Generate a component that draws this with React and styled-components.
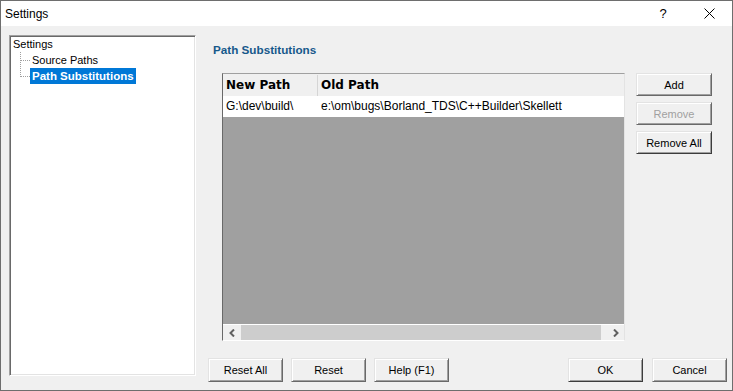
import React from "react";
import styled, { createGlobalStyle } from "styled-components";

const Global = createGlobalStyle`
  html, body { margin: 0; padding: 0; background: #f0f0f0; }
  body { font-family: "Liberation Sans", Arial, sans-serif; font-size: 11px; color: #000; }
  * { box-sizing: border-box; }
`;

const Window = styled.div`
  width: 733px;
  height: 391px;
  border: 1px solid #6e6e6e;
  background: #f0f0f0;
  display: flex;
  flex-direction: column;
`;

const TitleBar = styled.div`
  height: 25px;
  flex: none;
  background: #fff;
  display: flex;
  align-items: center;
`;

const Title = styled.div`
  flex: 1;
  padding-left: 4px;
  font-size: 12px;
`;

const CaptionButton = styled.div`
  width: 46px;
  height: 25px;
  display: flex;
  align-items: center;
  justify-content: center;
  font-size: 13px;
`;

const Body = styled.div`
  flex: 1;
  min-height: 0;
  display: flex;
  gap: 9px;
  padding: 9px 5px 8px 8px;
`;

const TreePanel = styled.div`
  width: 187px;
  height: 341px;
  flex: none;
  background: #fff;
  border: 1px solid;
  border-color: #a0a0a0 #fff #fff #a0a0a0;
  box-shadow: inset 1px 1px #696969, inset -1px -1px #e3e3e3;
`;

const TreeRoot = styled.div`
  height: 16px;
  line-height: 16px;
  padding-left: 3px;
`;

const TreeChildren = styled.div`
  position: relative;
  margin-left: 10px;
  &::before {
    content: "";
    position: absolute;
    left: 0;
    top: 0;
    height: 25px;
    border-left: 1px dotted #a0a0a0;
  }
`;

const TreeLeaf = styled.div`
  position: relative;
  height: 16px;
  padding-left: 10px;
  display: flex;
  align-items: center;
  &::before {
    content: "";
    position: absolute;
    left: 1px;
    top: 8px;
    width: 9px;
    border-top: 1px dotted #a0a0a0;
  }
`;

const LeafLabel = styled.span`
  height: 16px;
  line-height: 16px;
  padding: 0 2px;
  background: ${(p) => (p.$selected ? "#0078d7" : "transparent")};
  color: ${(p) => (p.$selected ? "#fff" : "#000")};
  font-weight: ${(p) => (p.$selected ? "bold" : "normal")};
  font-size: ${(p) => (p.$selected ? "11.5px" : "11px")};
`;

const RightColumn = styled.div`
  flex: 1;
  display: flex;
  flex-direction: column;
`;

const Heading = styled.div`
  margin: 7px 0 0 8px;
  height: 16px;
  line-height: 16px;
  font-weight: bold;
  font-size: 11.7px;
  color: #17598b;
`;

const Middle = styled.div`
  display: flex;
  align-items: flex-start;
  gap: 11px;
  margin-top: 15px;
  padding-left: 17px;
`;

const Grid = styled.div`
  width: 403px;
  height: 268px;
  border: 1px solid;
  border-color: #a0a0a0 #e3e3e3 #fff #696969;
  display: flex;
  flex-direction: column;
  background: #a0a0a0;
`;

const HeaderRow = styled.div`
  height: 22px;
  flex: none;
  display: grid;
  grid-template-columns: 95px 1fr;
  background: #f0f0f0;
`;

const HeaderCell = styled.div`
  padding-left: 3px;
  margin: 1px 0 0;
  line-height: 21px;
  font-family: "DejaVu Sans", Verdana, sans-serif;
  font-weight: bold;
  font-size: 12px;
  border-right: ${(p) => (p.$divider ? "1px solid #d5d5d5" : "none")};
`;

const DataRow = styled.div`
  height: 21px;
  flex: none;
  display: grid;
  grid-template-columns: 95px 1fr;
  background: #fff;
`;

const DataCell = styled.div`
  padding-left: 3px;
  line-height: 21px;
  font-size: 12px;
  white-space: nowrap;
`;

const Filler = styled.div`
  flex: 1;
  background: #a0a0a0;
`;

const HScroll = styled.div`
  height: 16px;
  flex: none;
  border-top: 1px solid #fff;
  background: #f0f0f0;
  display: flex;
`;

const ScrollArrow = styled.div`
  width: ${(p) => p.$w}px;
  flex: none;
  display: flex;
  align-items: center;
  justify-content: center;
`;

const Thumb = styled.div`
  width: 360px;
  flex: none;
  background: #cdcdcd;
`;

const Track = styled.div`
  flex: 1;
`;

const ButtonColumn = styled.div`
  display: flex;
  flex-direction: column;
  gap: 6px;
`;

const Button = styled.button`
  width: ${(p) => p.$w || 75}px;
  height: ${(p) => p.$h || 23}px;
  padding: 0;
  font-family: "Liberation Sans", Arial, sans-serif;
  font-size: 11px;
  color: ${(p) => (p.disabled ? "#a0a0a0" : "#000")};
  background: #f0f0f0;
  border: 1px solid;
  border-color: ${(p) =>
    p.$strong ? "#e3e3e3 #3c3c3c #3c3c3c #e3e3e3" : "#e3e3e3 #696969 #696969 #e3e3e3"};
  box-shadow: inset 1px 1px #fff, inset -1px -1px #a0a0a0;
`;

const BottomBar = styled.div`
  display: flex;
  align-items: center;
  gap: 8px;
  margin-top: 17px;
  padding-left: 3px;
`;

const Spacer = styled.div`
  flex: 1;
`;

const DialogButtons = styled.div`
  display: flex;
  gap: 9px;
`;

const Chevron = ({ dir }) => (
  <svg width="6" height="8" viewBox="0 0 6 8">
    <polyline
      points={dir === "left" ? "5,0.5 1.5,4 5,7.5" : "1,0.5 4.5,4 1,7.5"}
      fill="none"
      stroke="#606060"
      strokeWidth="2"
    />
  </svg>
);

export default function App() {
  return (
    <>
      <Global />
      <Window>
        <TitleBar>
          <Title>Settings</Title>
          <CaptionButton>?</CaptionButton>
          <CaptionButton>
            <svg width="11" height="11" viewBox="0 0 11 11">
              <path d="M0.5 0.5 L10.5 10.5 M10.5 0.5 L0.5 10.5" stroke="#000" strokeWidth="1" />
            </svg>
          </CaptionButton>
        </TitleBar>
        <Body>
          <TreePanel>
            <TreeRoot>Settings</TreeRoot>
            <TreeChildren>
              <TreeLeaf>
                <LeafLabel>Source Paths</LeafLabel>
              </TreeLeaf>
              <TreeLeaf>
                <LeafLabel $selected>Path Substitutions</LeafLabel>
              </TreeLeaf>
            </TreeChildren>
          </TreePanel>
          <RightColumn>
            <Heading>Path Substitutions</Heading>
            <Middle>
              <Grid>
                <HeaderRow>
                  <HeaderCell $divider>New Path</HeaderCell>
                  <HeaderCell>Old Path</HeaderCell>
                </HeaderRow>
                <DataRow>
                  <DataCell>G:\dev\build\</DataCell>
                  <DataCell>e:\om\bugs\Borland_TDS\C++Builder\Skellett</DataCell>
                </DataRow>
                <Filler />
                <HScroll>
                  <ScrollArrow $w={18}>
                    <Chevron dir="left" />
                  </ScrollArrow>
                  <Thumb />
                  <Track />
                  <ScrollArrow $w={17}>
                    <Chevron dir="right" />
                  </ScrollArrow>
                </HScroll>
              </Grid>
              <ButtonColumn>
                <Button $w={76}>Add</Button>
                <Button $w={76} disabled>
                  Remove
                </Button>
                <Button $w={76} $strong>
                  Remove All
                </Button>
              </ButtonColumn>
            </Middle>
            <BottomBar>
              <Button $h={24}>Reset All</Button>
              <Button $h={24}>Reset</Button>
              <Button $h={24}>Help (F1)</Button>
              <Spacer />
              <DialogButtons>
                <Button $h={24} $strong>
                  OK
                </Button>
                <Button $h={24}>Cancel</Button>
              </DialogButtons>
            </BottomBar>
          </RightColumn>
        </Body>
      </Window>
    </>
  );
}
